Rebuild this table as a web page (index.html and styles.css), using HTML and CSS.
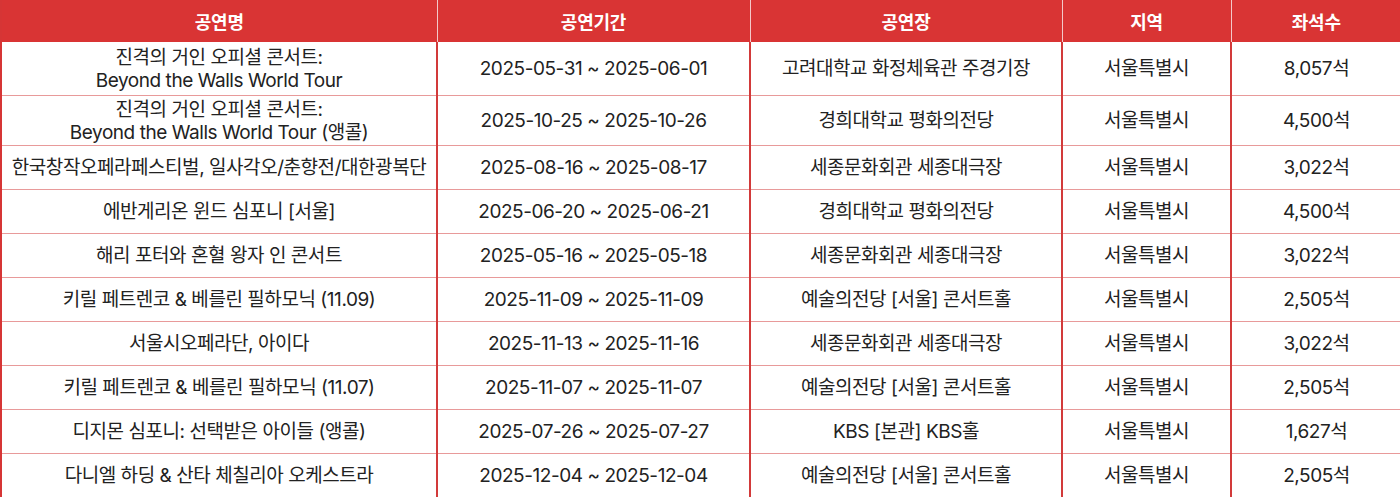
FILE: index.html
```html
<!DOCTYPE html>
<html lang="ko">
<head>
<meta charset="utf-8">
<link rel="stylesheet" href="styles.css">
</head>
<body>
<table class="perf">
  <colgroup>
    <col class="c-name"><col class="c-date"><col class="c-venue"><col class="c-area"><col class="c-seat">
  </colgroup>
  <thead>
    <tr><th>공연명</th><th>공연기간</th><th>공연장</th><th>지역</th><th>좌석수</th></tr>
  </thead>
  <tbody>
    <tr class="tall1"><td>진격의 거인 오피셜 콘서트:<br>Beyond the Walls World Tour</td><td>2025-05-31 ~ 2025-06-01</td><td>고려대학교 화정체육관 주경기장</td><td>서울특별시</td><td>8,057석</td></tr>
    <tr class="tall2"><td>진격의 거인 오피셜 콘서트:<br>Beyond the Walls World Tour (앵콜)</td><td>2025-10-25 ~ 2025-10-26</td><td>경희대학교 평화의전당</td><td>서울특별시</td><td>4,500석</td></tr>
    <tr><td>한국창작오페라페스티벌, 일사각오/춘향전/대한광복단</td><td>2025-08-16 ~ 2025-08-17</td><td>세종문화회관 세종대극장</td><td>서울특별시</td><td>3,022석</td></tr>
    <tr><td>에반게리온 윈드 심포니 [서울]</td><td>2025-06-20 ~ 2025-06-21</td><td>경희대학교 평화의전당</td><td>서울특별시</td><td>4,500석</td></tr>
    <tr><td>해리 포터와 혼혈 왕자 인 콘서트</td><td>2025-05-16 ~ 2025-05-18</td><td>세종문화회관 세종대극장</td><td>서울특별시</td><td>3,022석</td></tr>
    <tr><td>키릴 페트렌코 &amp; 베를린 필하모닉 (11.09)</td><td>2025-11-09 ~ 2025-11-09</td><td>예술의전당 [서울] 콘서트홀</td><td>서울특별시</td><td>2,505석</td></tr>
    <tr><td>서울시오페라단, 아이다</td><td>2025-11-13 ~ 2025-11-16</td><td>세종문화회관 세종대극장</td><td>서울특별시</td><td>3,022석</td></tr>
    <tr><td>키릴 페트렌코 &amp; 베를린 필하모닉 (11.07)</td><td>2025-11-07 ~ 2025-11-07</td><td>예술의전당 [서울] 콘서트홀</td><td>서울특별시</td><td>2,505석</td></tr>
    <tr><td>디지몬 심포니: 선택받은 아이들 (앵콜)</td><td>2025-07-26 ~ 2025-07-27</td><td>KBS [본관] KBS홀</td><td>서울특별시</td><td>1,627석</td></tr>
    <tr><td>다니엘 하딩 &amp; 산타 체칠리아 오케스트라</td><td>2025-12-04 ~ 2025-12-04</td><td>예술의전당 [서울] 콘서트홀</td><td>서울특별시</td><td>2,505석</td></tr>
  </tbody>
</table>
</body>
</html>
```
FILE: styles.css
```css
html, body {
  margin: 0;
  padding: 0;
  background: #ffffff;
}
body {
  font-family: "Inter", "Noto Sans CJK KR", sans-serif;
  color: #222222;
}
.perf {
  width: 1400px;
  border-collapse: collapse;
  table-layout: fixed;
  border-bottom: 3px solid #d63535;
  border-left: 2px solid #d63535;
}
.c-name { width: 436px; }
.c-date { width: 313px; }
.c-venue { width: 312px; }
.c-area { width: 169px; }
.c-seat { width: 170px; }
.perf th {
  height: 42px;
  padding: 0;
  background: #d93434;
  color: #ffffff;
  font-size: 18px;
  font-weight: 700;
  letter-spacing: -0.2px;
  border-left: 1px solid #f3c9c9;
  box-sizing: border-box;
}
.perf th:first-child { border-left: none; }
.perf td {
  height: 43px;
  padding: 0;
  text-align: center;
  font-size: 19px;
  font-weight: 400;
  letter-spacing: -0.45px;
  line-height: 23px;
  border-top: 1px solid #e89a9a;
  border-left: 2px solid #d23a3a;
}
.perf td:first-child { border-left: none; }
.perf tbody tr:first-child td { border-top: none; }
.perf tr.tall1 td { height: 53px; }
.perf tr.tall2 td { height: 49px; }
```
